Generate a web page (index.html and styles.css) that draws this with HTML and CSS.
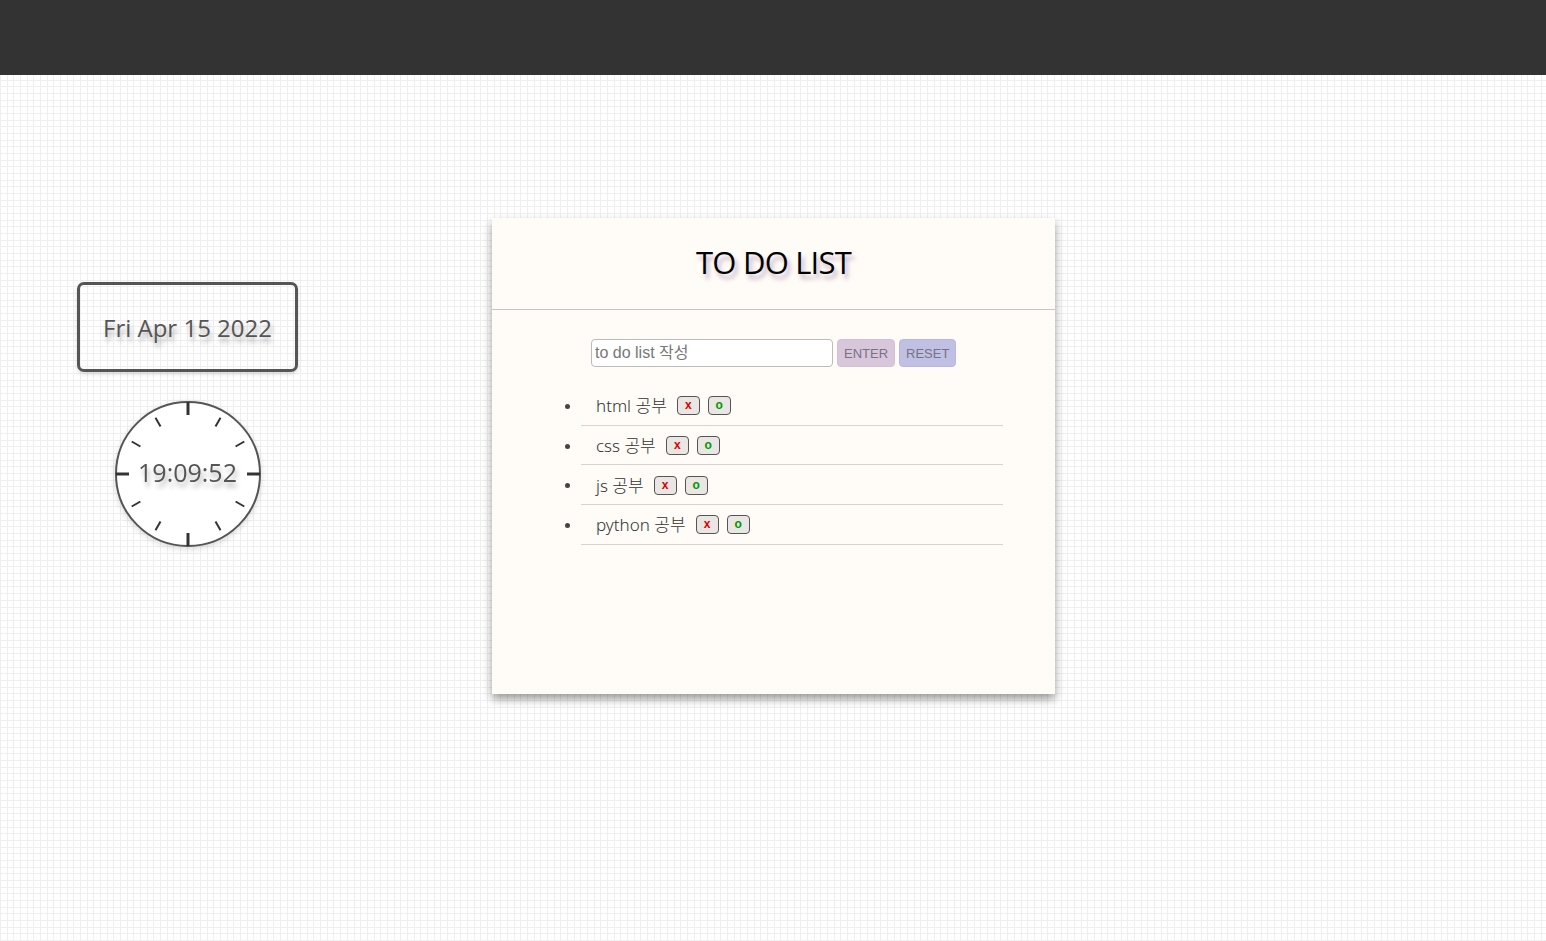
FILE: index.html
```html
<!DOCTYPE html>
<html lang="ko">
<head>
<meta charset="utf-8">
<title>TO DO LIST</title>
<link rel="stylesheet" href="styles.css">
</head>
<body>
<header class="topbar"></header>
<main class="stage">
  <aside class="side">
    <div class="date-box">Fri Apr 15 2022</div>
    <div class="clock">
      <svg class="clock-face" width="148" height="148" viewBox="0 0 148 148">
        <circle cx="74" cy="74" r="72" fill="#fff" stroke="#555" stroke-width="2"/>
        <g stroke="#333" stroke-linecap="butt">
          <line x1="74" y1="2" x2="74" y2="15" stroke-width="3"/>
          <line x1="74" y1="133" x2="74" y2="146" stroke-width="3"/>
          <line x1="2" y1="74" x2="15" y2="74" stroke-width="3"/>
          <line x1="133" y1="74" x2="146" y2="74" stroke-width="3"/>
          <g stroke-width="2">
            <line x1="106.5" y1="17.7" x2="101.5" y2="26.4"/>
            <line x1="130.3" y1="41.5" x2="121.6" y2="46.5"/>
            <line x1="130.3" y1="106.5" x2="121.6" y2="101.5"/>
            <line x1="106.5" y1="130.3" x2="101.5" y2="121.6"/>
            <line x1="41.5" y1="130.3" x2="46.5" y2="121.6"/>
            <line x1="17.7" y1="106.5" x2="26.4" y2="101.5"/>
            <line x1="17.7" y1="41.5" x2="26.4" y2="46.5"/>
            <line x1="41.5" y1="17.7" x2="46.5" y2="26.4"/>
          </g>
        </g>
      </svg>
      <span class="clock-time">19:09:52</span>
    </div>
  </aside>
  <section class="card">
    <h1 class="card-title">TO DO LIST</h1>
    <div class="card-body">
      <form class="todo-form">
        <input class="todo-input" type="text" placeholder="to do list 작성">
        <button type="button" class="btn btn-enter">ENTER</button>
        <button type="button" class="btn btn-reset">RESET</button>
      </form>
      <ul class="todo-list">
        <li class="todo-item"><span class="todo-text">html 공부</span><button class="mini mini-x">x</button><button class="mini mini-o">o</button></li>
        <li class="todo-item"><span class="todo-text">css 공부</span><button class="mini mini-x">x</button><button class="mini mini-o">o</button></li>
        <li class="todo-item"><span class="todo-text">js 공부</span><button class="mini mini-x">x</button><button class="mini mini-o">o</button></li>
        <li class="todo-item"><span class="todo-text">python 공부</span><button class="mini mini-x">x</button><button class="mini mini-o">o</button></li>
      </ul>
    </div>
  </section>
</main>
</body>
</html>
```
FILE: styles.css
```css
* { box-sizing: border-box; }
html, body { margin: 0; padding: 0; }
body {
  width: 1546px;
  height: 941px;
  overflow: hidden;
  font-family: "Noto Sans", "Noto Sans CJK KR", sans-serif;
  background-color: #fff;
  background-image:
    repeating-linear-gradient(90deg, #efefef 0, #efefef 1px, transparent 1px, transparent 6.67px),
    repeating-linear-gradient(0deg, #efefef 0, #efefef 1px, transparent 1px, transparent 6.67px);
}
.topbar {
  height: 75px;
  background: #333;
}
.stage {
  display: flex;
  align-items: flex-start;
  padding-top: 143px;
}
.side {
  margin-left: 77px;
  margin-top: 64px;
  width: 221px;
  display: flex;
  flex-direction: column;
  align-items: center;
}
.date-box {
  width: 221px;
  height: 90px;
  border: 3px solid #555;
  border-radius: 7px;
  display: flex;
  align-items: center;
  justify-content: center;
  font-family: "Open Sans", "Noto Sans", sans-serif;
  font-weight: 500;
  font-size: 24px;
  color: #555;
  text-shadow: 2px 5px 5px rgba(0,0,0,0.3);
  box-shadow: 0 2px 4px rgba(0,0,0,0.15);
}
.clock {
  position: relative;
  width: 148px;
  height: 148px;
  margin-top: 28px;
  filter: drop-shadow(0 2px 3px rgba(0,0,0,0.15));
}
.clock-face { display: block; }
.clock-time {
  position: absolute;
  left: 0;
  right: 0;
  top: 55px;
  text-align: center;
  font-family: "Open Sans", "Noto Sans", sans-serif;
  font-weight: 500;
  font-size: 25px;
  color: #555;
  text-shadow: 2px 5px 5px rgba(0,0,0,0.3);
}
.card {
  margin-left: 194px;
  width: 563px;
  height: 476px;
  background: #fffbf7;
  box-shadow: 0 5px 9px rgba(0,0,0,0.4);
}
.card-title {
  margin: 0;
  height: 92px;
  border-bottom: 1px solid #c8c4c4;
  display: flex;
  align-items: center;
  justify-content: center;
  padding-bottom: 3px;
  font-family: "Open Sans", "Noto Sans", sans-serif;
  font-weight: 400;
  font-size: 31px;
  letter-spacing: -0.8px;
  color: #000;
  text-shadow: 3px 5px 4px rgba(90,50,110,0.35);
}
.card-body {
  padding: 29px 0 0 0;
}
.todo-form {
  display: flex;
  align-items: center;
  margin: 0 0 0 99px;
}
.todo-input {
  width: 242px;
  height: 28px;
  border: 1px solid #bbb;
  border-radius: 4px;
  padding: 0 3px;
  font-family: "Liberation Sans", Arial, "Noto Sans CJK KR", sans-serif;
  font-size: 16px;
  color: #333;
  background: #fff;
  outline: none;
}
.todo-input::placeholder { color: #777; }
.btn {
  height: 28px;
  border: 1px solid transparent;
  border-radius: 4px;
  font-family: "Liberation Sans", Arial, sans-serif;
  font-size: 13px;
  color: #7a7185;
  padding: 0 6px;
  margin-left: 4px;
}
.btn-enter { background: #d8c6db; border-color: #d3c2d6; width: 58px; margin-left: 4px; }
.btn-reset { background: #bfc0e3; border-color: #b8b9dd; width: 57px; }
.todo-list {
  list-style: disc;
  margin: 19px 0 0 89px;
  padding: 0;
  width: 422px;
}
.todo-item {
  display: flex;
  align-items: center;
  height: 39.7px;
  padding-left: 15px;
  padding-bottom: 1px;
  border-bottom: 1px solid #d6d4d2;
  color: #444;
  font-size: 17px;
  position: relative;
}
.todo-item::before {
  content: "";
  position: absolute;
  left: -16px;
  top: 18px;
  width: 5px;
  height: 5px;
  border-radius: 50%;
  background: #444;
}
.todo-text {
  font-family: "Noto Sans", "Noto Sans CJK KR", sans-serif;
  font-weight: 300;
  color: #333;
  margin-right: 10px;
}
.mini {
  width: 23px;
  height: 19px;
  padding: 0;
  margin-right: 8px;
  border: 1px solid #555;
  border-radius: 4px;
  background: #e9e6e3;
  font-family: "Liberation Sans", Arial, sans-serif;
  font-weight: 700;
  font-size: 12px;
  line-height: 15px;
  margin-top: 2px;
}
.mini-x { color: #d00; }
.mini-o { color: #090; }
```
